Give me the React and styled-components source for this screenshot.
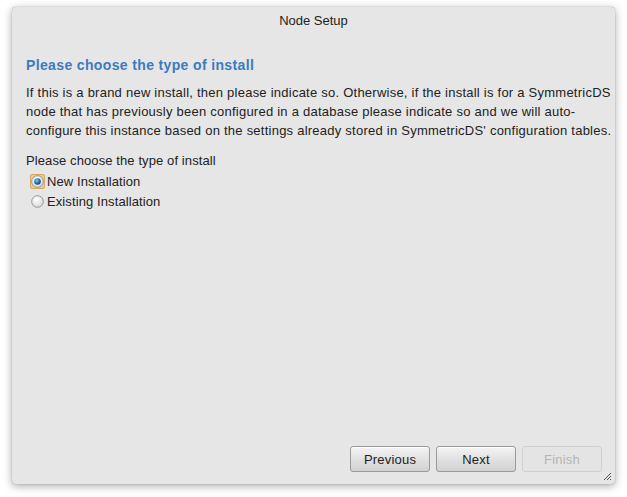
import React, { useState } from "react";
import styled, { createGlobalStyle } from "styled-components";

const Global = createGlobalStyle`
  html, body { margin: 0; padding: 0; background: #ffffff; }
  body { font-family: "Liberation Sans", Arial, sans-serif; }
`;

const Page = styled.div`
  width: 627px;
  height: 497px;
  padding: 7px 12px 13px 12px;
  box-sizing: border-box;
`;

const Window = styled.div`
  height: 100%;
  background: #e6e6e6;
  border-radius: 4px;
  box-shadow: 0 2px 8px rgba(0,0,0,0.35), 0 0 1px rgba(0,0,0,0.4);
  display: flex;
  flex-direction: column;
  position: relative;
  box-sizing: border-box;
`;

const Header = styled.div`
  height: 26px;
  display: flex;
  align-items: center;
  justify-content: center;
  font-size: 13px;
  color: #222;
`;

const Content = styled.div`
  flex: 1;
  padding: 23px 0 0 14px;
  color: #222;
  font-size: 13px;
  letter-spacing: 0.1px;
`;

const Heading = styled.h2`
  margin: 0;
  font-size: 14px;
  font-weight: bold;
  color: #3b7bbf;
  line-height: 18px;
  letter-spacing: 0.36px;
`;

const Para = styled.p`
  margin: 9px 0 0 0;
  line-height: 19px;
  white-space: nowrap;
  letter-spacing: 0.24px;
`;

const Caption = styled.div`
  margin-top: 11px;
  line-height: 19px;
`;

const RadioRow = styled.label`
  display: flex;
  align-items: center;
  gap: 2px;
  height: 20px;
  padding-left: 4px;
  margin-top: ${(p) => (p.first ? "1px" : "0")};
`;

const RadioBox = styled.span`
  width: 15px;
  height: 15px;
  display: inline-flex;
  align-items: center;
  justify-content: center;
  border-radius: 2px;
  background: ${(p) => (p.focused ? "#f2c98a" : "transparent")};
  border: 1px solid ${(p) => (p.focused ? "#d9a75a" : "transparent")};
  box-sizing: border-box;
`;

const Footer = styled.div`
  display: flex;
  justify-content: flex-end;
  gap: 6px;
  padding: 0 13px 12px 0;
`;

const Button = styled.button`
  width: 80px;
  height: 26px;
  font-family: "Liberation Sans", Arial, sans-serif;
  font-size: 13px;
  letter-spacing: 0.2px;
  color: ${(p) => (p.disabled ? "#b5b5b5" : "#222")};
  border: 1px solid ${(p) => (p.disabled ? "#d0d0d0" : "#9a9a9a")};
  border-radius: 3px;
  background: ${(p) =>
    p.disabled
      ? "#e4e4e4"
      : "linear-gradient(#f4f4f4, #dedede 60%, #d2d2d2)"};
  box-shadow: ${(p) => (p.disabled ? "none" : "inset 0 1px 0 #fff")};
  padding: 0;
`;

const Grip = styled.svg`
  position: absolute;
  right: 3px;
  bottom: 3px;
`;

function Radio({ checked, focused }) {
  return (
    <RadioBox focused={focused}>
      <svg width="13" height="13" viewBox="0 0 13 13">
        <defs>
          <radialGradient id={checked ? "rg1" : "rg2"} cx="40%" cy="35%" r="70%">
            <stop offset="0" stopColor="#ffffff" />
            <stop offset="1" stopColor="#d8d8d8" />
          </radialGradient>
          <radialGradient id="dot" cx="40%" cy="35%" r="70%">
            <stop offset="0" stopColor="#7fc8f0" />
            <stop offset="0.6" stopColor="#1b6fb0" />
            <stop offset="1" stopColor="#0c3f6b" />
          </radialGradient>
        </defs>
        <circle cx="6.5" cy="6.5" r="5.8" fill={`url(#${checked ? "rg1" : "rg2"})`} stroke="#8e8e8e" strokeWidth="0.9" />
        {checked && <circle cx="6.5" cy="6.5" r="3.3" fill="url(#dot)" />}
      </svg>
    </RadioBox>
  );
}

export default function App() {
  const [val, setVal] = useState("new");
  return (
    <>
      <Global />
      <Page>
        <Window>
          <Header>Node Setup</Header>
          <Content>
            <Heading>Please choose the type of install</Heading>
            <Para>
              If this is a brand new install, then please indicate so. Otherwise, if the install is for a SymmetricDS
              <br />
              node that has previously been configured in a database please indicate so and we will auto-
              <br />
              configure this instance based on the settings already stored in SymmetricDS' configuration tables.
            </Para>
            <Caption>Please choose the type of install</Caption>
            <RadioRow first onClick={() => setVal("new")}>
              <Radio checked={val === "new"} focused={val === "new"} />
              New Installation
            </RadioRow>
            <RadioRow onClick={() => setVal("existing")}>
              <Radio checked={val === "existing"} focused={val === "existing"} />
              Existing Installation
            </RadioRow>
          </Content>
          <Footer>
            <Button>Previous</Button>
            <Button>Next</Button>
            <Button disabled>Finish</Button>
          </Footer>
          <Grip width="10" height="10" viewBox="0 0 10 10">
            <path d="M9 2 L2 9 M9 5 L5 9 M9 8 L8 9" stroke="#555" strokeWidth="1" />
          </Grip>
        </Window>
      </Page>
    </>
  );
}
